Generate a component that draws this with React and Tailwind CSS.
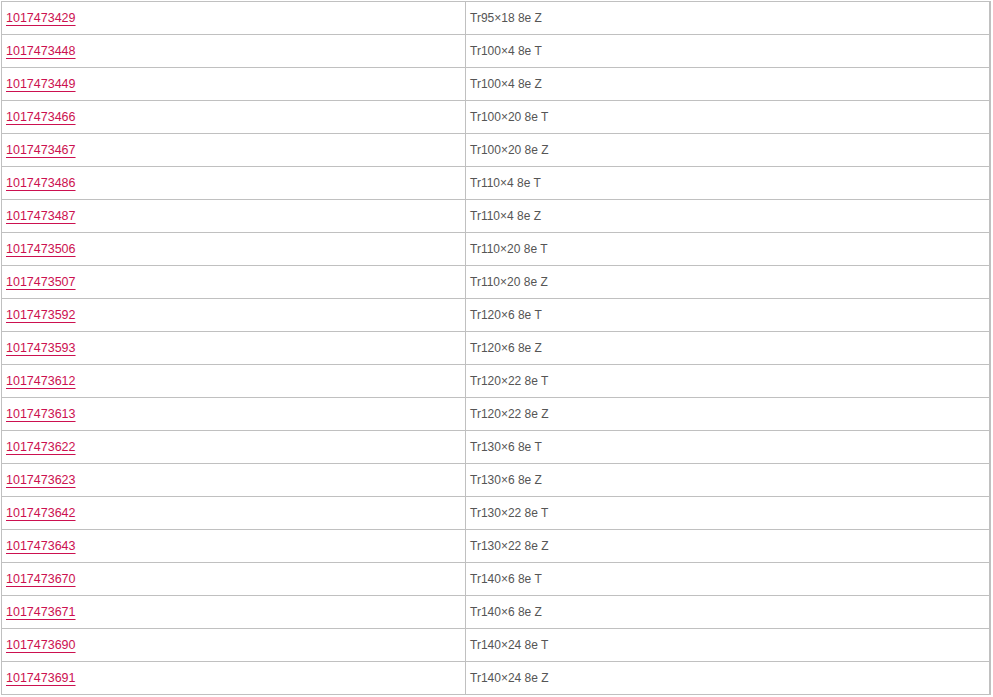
import React from 'react';

const rows = [
  ['1017473429', 'Tr95×18 8e Z'],
  ['1017473448', 'Tr100×4 8e T'],
  ['1017473449', 'Tr100×4 8e Z'],
  ['1017473466', 'Tr100×20 8e T'],
  ['1017473467', 'Tr100×20 8e Z'],
  ['1017473486', 'Tr110×4 8e T'],
  ['1017473487', 'Tr110×4 8e Z'],
  ['1017473506', 'Tr110×20 8e T'],
  ['1017473507', 'Tr110×20 8e Z'],
  ['1017473592', 'Tr120×6 8e T'],
  ['1017473593', 'Tr120×6 8e Z'],
  ['1017473612', 'Tr120×22 8e T'],
  ['1017473613', 'Tr120×22 8e Z'],
  ['1017473622', 'Tr130×6 8e T'],
  ['1017473623', 'Tr130×6 8e Z'],
  ['1017473642', 'Tr130×22 8e T'],
  ['1017473643', 'Tr130×22 8e Z'],
  ['1017473670', 'Tr140×6 8e T'],
  ['1017473671', 'Tr140×6 8e Z'],
  ['1017473690', 'Tr140×24 8e T'],
  ['1017473691', 'Tr140×24 8e Z'],
];

export default function App() {
  return (
    <div className="bg-white min-h-[697px] pt-[1px] pl-[1px] font-['Liberation_Sans',Arial,sans-serif] text-[12px]">
      <div className="w-[990px] border-t border-l border-r-2 border-[#c0c0c0]">
        {rows.map(([code, name]) => (
          <div key={code} className="flex h-[33px] border-b border-[#c0c0c0]">
            <div className="w-[464px] border-r border-[#c0c0c0] flex items-center pl-[4px]">
              <a
                href="#"
                className="text-[12.5px] text-[#cc1150] underline decoration-[#cc1150] underline-offset-[3px]"
              >
                {code}
              </a>
            </div>
            <div className="flex-1 flex items-center pl-[4px] text-[#555]">{name}</div>
          </div>
        ))}
      </div>
    </div>
  );
}
